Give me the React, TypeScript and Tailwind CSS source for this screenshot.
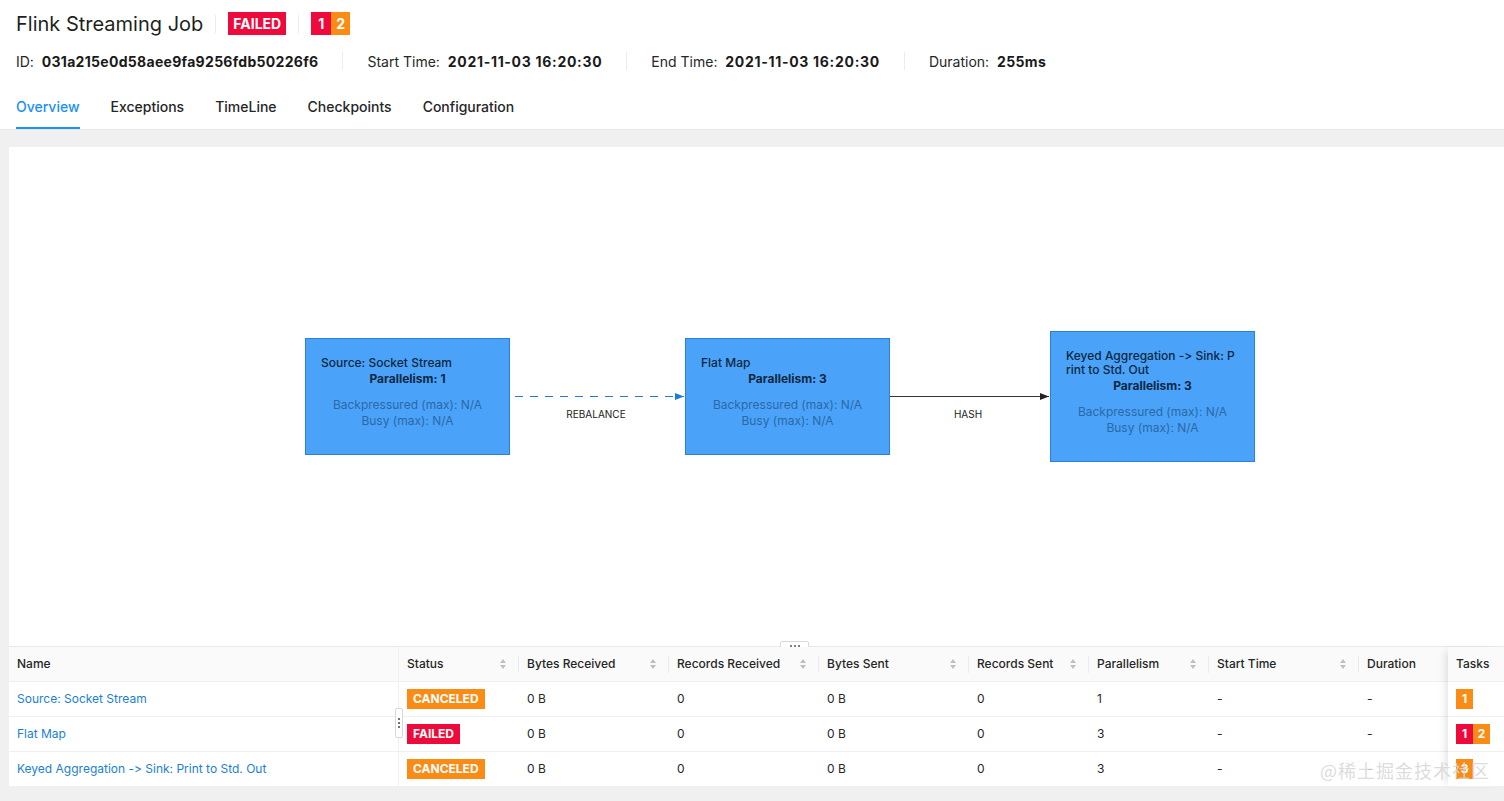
import React from 'react'

const font = { fontFamily: 'Inter, "Noto Sans", "Noto Sans CJK SC", sans-serif', fontFeatureSettings: '"calt" 0' }

function Sorter() {
  return (
    <svg width="8" height="12" viewBox="0 0 8 12" className="shrink-0">
      <path d="M4 1 L7 5 L1 5 Z" fill="#bfbfbf" />
      <path d="M4 11 L7 7 L1 7 Z" fill="#bfbfbf" />
    </svg>
  )
}

function Divider() {
  return <span className="w-px h-[18px] bg-[#ececec]" />
}

const cols = [
  { key: 'name', label: 'Name', w: 'w-[390px]', sort: false },
  { key: 'status', label: 'Status', w: 'w-[120px]', sort: true },
  { key: 'br', label: 'Bytes Received', w: 'w-[150px]', sort: true },
  { key: 'rr', label: 'Records Received', w: 'w-[150px]', sort: true },
  { key: 'bs', label: 'Bytes Sent', w: 'w-[150px]', sort: true },
  { key: 'rs', label: 'Records Sent', w: 'w-[120px]', sort: true },
  { key: 'par', label: 'Parallelism', w: 'w-[120px]', sort: true },
  { key: 'st', label: 'Start Time', w: 'w-[150px]', sort: true },
  { key: 'dur', label: 'Duration', w: 'w-[90px]', sort: false },
]

const rows = [
  { name: 'Source: Socket Stream', status: 'CANCELED', par: '1', tasks: [{ n: '1', c: 'bg-[#fa8c16]' }] },
  { name: 'Flat Map', status: 'FAILED', par: '3', tasks: [{ n: '1', c: 'bg-[#ee0a3b]' }, { n: '2', c: 'bg-[#fa8c16]' }] },
  { name: 'Keyed Aggregation -> Sink: Print to Std. Out', status: 'CANCELED', par: '3', tasks: [{ n: '3', c: 'bg-[#fa8c16]' }] },
]

function StatusTag({ s }: { s: string }) {
  const bg = s === 'FAILED' ? 'bg-[#ee0a3b]' : 'bg-[#fa8c16]'
  return <span className={`${bg} text-white font-bold text-[12px] leading-[20px] h-[20px] px-[6px] inline-block`}>{s}</span>
}

function Node({ title, par, className }: { title: React.ReactNode; par: string; className: string }) {
  return (
    <div className={`absolute w-[205px] bg-[#4aa3f8] border border-[#2a7fd6] pt-[17px] px-[15px] text-[12px] ${className}`}>
      <div className="text-[#0e2741] leading-[14px] font-medium">{title}</div>
      <div className="text-[#0e2741] font-bold text-center leading-[16px] mt-[1px]">Parallelism: {par}</div>
      <div className="text-[#2a68a8] text-center leading-[16px] mt-[10px]">
        <div>Backpressured (max): N/A</div>
        <div>Busy (max): N/A</div>
      </div>
    </div>
  )
}

export default function App() {
  return (
    <div className="w-[1504px] h-[801px] bg-[#f0f0f0] overflow-hidden text-[#262626]" style={font}>
      <header className="bg-white border-b border-[#e8e8e8] px-4">
        <div className="h-[47px] flex items-center gap-3">
          <h1 className="text-[20px] text-[#1f1f1f] font-normal">Flink Streaming Job</h1>
          <Divider />
          <span className="bg-[#ee0a3b] text-white font-bold text-[14px] h-[23px] leading-[23px] px-[5px]">FAILED</span>
          <Divider />
          <span className="flex text-white font-bold text-[14px] leading-[23px]">
            <span className="bg-[#ee0a3b] w-[20px] h-[23px] text-center">1</span>
            <span className="bg-[#fa8c16] w-[19px] h-[23px] text-center">2</span>
          </span>
        </div>
        <div className="h-[28px] flex items-center text-[14px] gap-[24px]">
          <span>ID:&nbsp; <b className="font-bold text-[#1a1a1a] tracking-[0.3px]">031a215e0d58aee9fa9256fdb50226f6</b></span>
          <Divider />
          <span>Start Time:&nbsp; <b className="font-bold text-[#1a1a1a] tracking-[0.7px]">2021-11-03 16:20:30</b></span>
          <Divider />
          <span>End Time:&nbsp; <b className="font-bold text-[#1a1a1a] tracking-[0.7px]">2021-11-03 16:20:30</b></span>
          <Divider />
          <span>Duration:&nbsp; <b className="font-bold text-[#1a1a1a] tracking-[0.4px]">255ms</b></span>
        </div>
        <nav className="h-[54px] flex items-end gap-[31px] text-[14px] font-medium">
          <span className="pb-[10px] border-b-2 border-[#1890ff] text-[#1890ff] leading-[20px]">Overview</span>
          <span className="pb-[12px] leading-[20px]">Exceptions</span>
          <span className="pb-[12px] leading-[20px]">TimeLine</span>
          <span className="pb-[12px] leading-[20px]">Checkpoints</span>
          <span className="pb-[12px] leading-[20px]">Configuration</span>
        </nav>
      </header>

      <main className="ml-[9px] mt-[17px] bg-white relative">
        <div className="relative h-[500px] border-b border-[#e8e8e8]">
          <svg className="absolute inset-0" width="1495" height="500">
            <defs>
              <marker id="ab" markerWidth="10" markerHeight="8" refX="9" refY="4" orient="auto" markerUnits="userSpaceOnUse">
                <path d="M0 0.5 L9 4 L0 7.5 Z" fill="#1f7ad8" />
              </marker>
              <marker id="ak" markerWidth="10" markerHeight="8" refX="9" refY="4" orient="auto" markerUnits="userSpaceOnUse">
                <path d="M0 0.5 L9 4 L0 7.5 Z" fill="#222" />
              </marker>
            </defs>
            <line x1="506" y1="249.5" x2="675" y2="249.5" stroke="#1f7ad8" strokeWidth="1.2" strokeDasharray="8 7" markerEnd="url(#ab)" />
            <line x1="881" y1="249.5" x2="1040" y2="249.5" stroke="#333" strokeWidth="1" markerEnd="url(#ak)" />
          </svg>
          <span className="absolute left-[557px] top-[260px] text-[10px] text-[#222] w-[60px] text-center">REBALANCE</span>
          <span className="absolute left-[929px] top-[260px] text-[10px] text-[#222] w-[60px] text-center">HASH</span>
          <Node className="left-[296px] top-[191px] h-[117px]" title="Source: Socket Stream" par="1" />
          <Node className="left-[676px] top-[191px] h-[117px]" title="Flat Map" par="3" />
          <Node
            className="left-[1041px] top-[184px] h-[131px]"
            title={<>Keyed Aggregation -&gt; Sink: P<br />rint to Std. Out</>}
            par="3"
          />
          <div className="absolute left-[771px] top-[494px] w-[29px] h-[10px] bg-white border border-[#d9d9d9] rounded-[2px] flex items-center justify-center gap-[2px]">
            <span className="w-[2px] h-[2px] rounded-full bg-[#555]" />
            <span className="w-[2px] h-[2px] rounded-full bg-[#555]" />
            <span className="w-[2px] h-[2px] rounded-full bg-[#555]" />
          </div>
        </div>

        <div className="text-[12px] relative">
          <div className="flex h-[35px] bg-[#fafafa] border-b border-[#f0f0f0] font-medium text-[#262626]">
            {cols.map((c, i) => (
              <div key={c.key} className={`${c.w} shrink-0 flex items-center pl-2 pr-3 relative ${i === 0 ? 'border-r border-[#f0f0f0]' : ''}`}>
                <span className="flex-1">{c.label}</span>
                {c.sort && <Sorter />}
                {i > 0 && c.sort && <span className="absolute right-0 top-[9px] w-px h-[17px] bg-[#ececec]" />}
              </div>
            ))}
          </div>
          {rows.map((r, ri) => (
            <div key={ri} className="flex h-[35px] border-b border-[#f0f0f0] items-center">
              <div className="w-[390px] shrink-0 pl-2 text-[#1a7fd4] h-full flex items-center border-r border-[#f0f0f0]">{r.name}</div>
              <div className="w-[120px] shrink-0 pl-2"><StatusTag s={r.status} /></div>
              <div className="w-[150px] shrink-0 pl-2">0 B</div>
              <div className="w-[150px] shrink-0 pl-2">0</div>
              <div className="w-[150px] shrink-0 pl-2">0 B</div>
              <div className="w-[120px] shrink-0 pl-2">0</div>
              <div className="w-[120px] shrink-0 pl-2">{r.par}</div>
              <div className="w-[150px] shrink-0 pl-2">-</div>
              <div className="w-[90px] shrink-0 pl-2">-</div>
            </div>
          ))}

          <div className="absolute right-0 top-0 w-[56px] bg-white shadow-[-6px_0_8px_-4px_rgba(0,0,0,0.12)]">
            <div className="h-[35px] bg-[#fafafa] border-b border-[#f0f0f0] flex items-center pl-2 font-medium">Tasks</div>
            {rows.map((r, ri) => (
              <div key={ri} className="h-[35px] border-b border-[#f0f0f0] flex items-center pl-2">
                {r.tasks.map((t, ti) => (
                  <span key={ti} className={`${t.c} text-white font-bold w-[17px] h-[20px] leading-[20px] text-center`}>{t.n}</span>
                ))}
              </div>
            ))}
          </div>

          <div className="absolute left-[386px] top-[61px] w-[8px] h-[30px] bg-white border border-[#d9d9d9] rounded-[2px] flex flex-col items-center justify-center gap-[2px]">
            <span className="w-[2px] h-[2px] rounded-full bg-[#444]" />
            <span className="w-[2px] h-[2px] rounded-full bg-[#444]" />
            <span className="w-[2px] h-[2px] rounded-full bg-[#444]" />
          </div>
          <span className="absolute left-[1311px] top-[110px] text-[18px] text-[#d8d8d8]/90 tracking-[1px]" style={{ fontFamily: '"Noto Sans CJK SC", sans-serif' }}>@稀土掘金技术社区</span>
        </div>
      </main>
    </div>
  )
}
